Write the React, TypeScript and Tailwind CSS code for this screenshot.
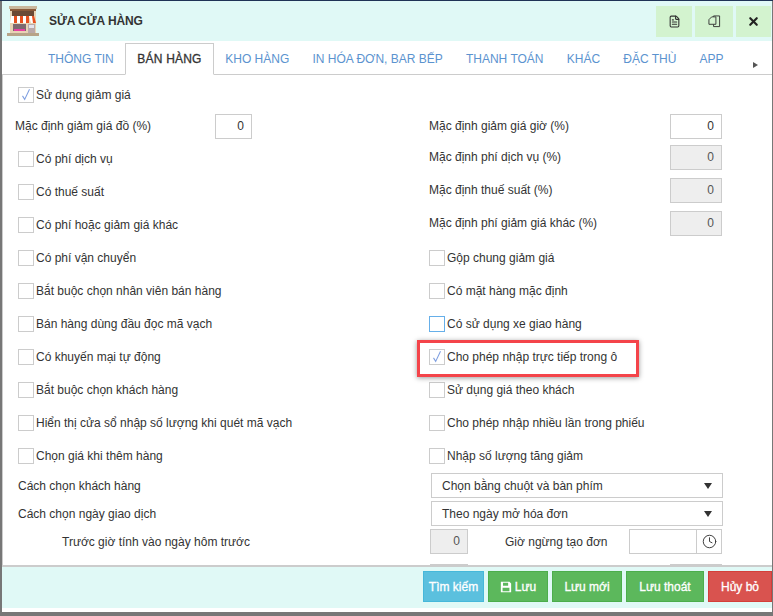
import { FileText, X, Clock } from "lucide-react"

const tabs = ["THÔNG TIN", "BÁN HÀNG", "KHO HÀNG", "IN HÓA ĐƠN, BAR BẾP", "THANH TOÁN", "KHÁC", "ĐẶC THÙ", "APP"]

function Check({ label, checked, focus }: { label: string; checked?: boolean; focus?: boolean }) {
  return (
    <div className="flex items-center h-[33px]">
      <span className={`w-[16px] h-[16px] bg-white border flex items-center justify-center shrink-0 ${focus ? "border-[#66afe9]" : "border-[#ccc]"}`}>
        {checked && (
          <svg viewBox="0 0 16 16" className="w-[14px] h-[14px]">
            <path d="M4 9 L6.5 13 L12 1.5" fill="none" stroke="#7f9fe0" strokeWidth="1.2" />
          </svg>
        )}
      </span>
      <span className="ml-[2px] text-[12px] whitespace-nowrap">{label}</span>
    </div>
  )
}

function Num({ w, off }: { w: string; off?: boolean }) {
  return (
    <div className={`${w} h-[25px] border border-[#ccc] text-right pr-[7px] text-[12px] leading-[23px] ${off ? "bg-[#eee] text-[#555]" : "bg-white"}`}>0</div>
  )
}

function Field({ label }: { label: string }) {
  return (
    <div className="flex items-center justify-between h-[33px] pb-[3px]">
      <span className="text-[12px]">{label}</span>
      <Num w="w-[52px]" off />
    </div>
  )
}

function Select({ text }: { text: string }) {
  return (
    <div className="w-[292px] h-[25px] border border-[#ccc] bg-white flex items-center justify-between pl-[10px] pr-[10px] text-[12px]">
      <span>{text}</span>
      <span className="w-0 h-0 border-x-[4px] border-x-transparent border-t-[6px] border-t-[#333]" />
    </div>
  )
}

function Store() {
  return (
    <svg viewBox="0 0 32 32" className="w-[32px] h-[32px]">
      <rect x="2" y="1" width="28" height="3" fill="#c9b79c" />
      <rect x="3" y="4" width="26" height="24" fill="#e8d3b4" />
      <rect x="3" y="4" width="26" height="2" fill="#8a5a3a" />
      <rect x="5" y="6" width="22" height="5" fill="#6b4a35" />
      <path d="M4 11h3v7H3zM10 11h3v7h-3zM16 11h3v7h-3zM22 11h3l2 7h-3z" fill="#fff" />
      <path d="M7 11h3v7H7zM13 11h3v7h-3zM19 11h3v7h-3zM25 11h2l2 7h-3z" fill="#e8501e" />
      <rect x="6" y="19" width="13" height="7" fill="#7c6a70" />
      <rect x="7" y="24" width="11" height="2" fill="#e83fa0" />
      <rect x="21" y="19" width="7" height="9" fill="#b9a9a9" />
      <rect x="22" y="20" width="5" height="3" fill="#e4e4ee" />
      <rect x="0" y="28" width="32" height="3" fill="#b7a488" />
    </svg>
  )
}

function Duplicate() {
  return (
    <svg viewBox="0 0 14 14" className="w-[13px] h-[13px]" fill="none" stroke="#333" strokeWidth="1">
      <path d="M6 3 V1 H12.5 V12.5 H6 V10" />
      <path d="M1 5 L4 2 H8.5 V10 H1 Z" fill="#d3f3cf" />
    </svg>
  )
}

function Floppy() {
  return (
    <svg viewBox="0 0 14 14" className="w-[12px] h-[12px]" fill="#fff">
      <path fillRule="evenodd" d="M1 1h10l2 2v10H1zM3.5 2v3.5h6V2zM3 8v4h8V8z" />
    </svg>
  )
}

export default function App() {
  return (
    <div className="relative w-[773px] h-[616px] bg-[#777] overflow-hidden text-[#333] font-['Liberation_Sans',Arial,sans-serif]">
      <div className="h-px bg-[#1f3356]" />
      <div className="ml-[2px] mr-[1px] h-[611px] bg-white flex flex-col">
        {/* header */}
        <div className="h-[40px] bg-[#e0f9f6] flex items-center pl-[5px] pr-[1px] shrink-0">
          <Store />
          <span className="ml-[10px] text-[12px] font-bold text-[#333] tracking-[-0.1px]">SỬA CỬA HÀNG</span>
          <div className="ml-auto flex gap-[3px]">
            <button className="w-[36px] h-[31px] bg-[#d3f3cf] flex items-center justify-center"><FileText className="w-[13px] h-[13px] text-[#333]" /></button>
            <button className="w-[38px] h-[31px] bg-[#d3f3cf] flex items-center justify-center"><Duplicate /></button>
            <button className="w-[35px] h-[31px] bg-[#d3f3cf] flex items-center justify-center"><X className="w-[13px] h-[13px] text-[#222]" strokeWidth={4} /></button>
          </div>
        </div>
        {/* tabs */}
        <div className="relative h-[34px] shrink-0 flex items-end pl-[34.4px] border-b border-[#ccc]">
          {tabs.map((t) => (
            <div
              key={t}
              className={
                t === "BÁN HÀNG"
                  ? "h-[32px] px-[11px] -mb-px bg-white border border-[#ccc] border-b-white text-[12px] leading-[30px] text-[#333] whitespace-nowrap tracking-[0.2px] [-webkit-text-stroke:0.3px_#333]"
                  : "h-[31px] px-[11.6px] -mb-px text-[12px] leading-[30px] text-[#5b93cf] whitespace-nowrap"
              }
            >
              {t}
            </div>
          ))}
          <span className="absolute left-[751px] top-[21px] w-0 h-0 border-y-[3.5px] border-y-transparent border-l-[5px] border-l-[#555]" />
        </div>
        {/* body */}
        <div className="flex-1 min-h-0 overflow-hidden border-l border-[#ccc] pl-[14px] pr-[48px] pt-[3px] text-[12px]">
          <div className="h-[33px] pl-[1px]"><Check label="Sử dụng giảm giá" checked /></div>
          <div className="grid grid-cols-[235px_293px] gap-x-[177px] -mt-[1px] h-[32px] items-center">
            <div className="flex items-center justify-between -ml-[2px]">
              <span>Mặc định giảm giá đồ (%)</span>
              <Num w="w-[37px]" />
            </div>
            <div className="flex items-center justify-between w-[293px]">
              <span>Mặc định giảm giá giờ (%)</span>
              <Num w="w-[52px]" />
            </div>
          </div>
          <div className="grid grid-cols-[412px_293px]">
            <div className="pl-px">
              <Check label="Có phí dịch vụ" />
              <Check label="Có thuế suất" />
              <Check label="Có phí hoặc giảm giá khác" />
              <Check label="Có phí vận chuyển" />
              <Check label="Bắt buộc chọn nhân viên bán hàng" />
              <Check label="Bán hàng dùng đầu đọc mã vạch" />
              <Check label="Có khuyến mại tự động" />
              <Check label="Bắt buộc chọn khách hàng" />
              <Check label="Hiển thị cửa sổ nhập số lượng khi quét mã vạch" />
              <Check label="Chọn giá khi thêm hàng" />
            </div>
            <div>
              <Field label="Mặc định phí dịch vụ (%)" />
              <Field label="Mặc định thuế suất (%)" />
              <Field label="Mặc định phí giảm giá khác (%)" />
              <Check label="Gộp chung giảm giá" />
              <Check label="Có mặt hàng mặc định" />
              <Check label="Có sử dụng xe giao hàng" focus />
              <Check label="Cho phép nhập trực tiếp trong ô" checked />
              <Check label="Sử dụng giá theo khách" />
              <Check label="Cho phép nhập nhiều lần trong phiếu" />
              <Check label="Nhập số lượng tăng giảm" />
            </div>
          </div>
          <div className="grid grid-cols-[414px_292px] gap-y-[3px] items-center mt-[1px]">
            <span className="pl-px">Cách chọn khách hàng</span>
            <Select text="Chọn bằng chuột và bàn phím" />
            <span className="pl-px">Cách chọn ngày giao dịch</span>
            <Select text="Theo ngày mở hóa đơn" />
            <span className="pl-[45px]">Trước giờ tính vào ngày hôm trước</span>
            <div className="flex items-center -ml-px">
              <Num w="w-[38px]" off />
              <span className="ml-[37px] w-[124px]">Giờ ngừng tạo đơn</span>
              <div className="w-[68px] h-[25px] border border-[#ccc]" />
              <div className="w-[25px] h-[25px] border border-l-0 border-[#ccc] flex items-center justify-center">
                <Clock className="w-[15px] h-[15px] text-[#333]" strokeWidth={1.5} />
              </div>
            </div>
            <span />
            {/* next row, cut off by the footer */}
            <div className="flex mt-[7px] -ml-px">
              <div className="w-[38px] h-[25px] border border-[#ccc] bg-[#eee]" />
              <div className="ml-[202px] w-[52px] h-[25px] border border-[#ccc] bg-[#eee]" />
            </div>
          </div>
        </div>
        {/* footer */}
        <div className="h-[43px] mb-[4px] shrink-0 bg-[#e0f9f6] border-t-2 border-[#ccc] flex justify-end items-start pt-[4px] gap-[4px]">
          <button className="w-[61px] h-[31px] bg-[#5bc0de] text-white text-[12px] [-webkit-text-stroke:0.3px_#fff] border border-[#46b8da] whitespace-nowrap">Tìm kiếm</button>
          <button className="w-[60px] h-[31px] bg-[#5cb85c] text-white text-[12px] [-webkit-text-stroke:0.3px_#fff] border border-[#4cae4c] flex items-center justify-center gap-[3px] whitespace-nowrap"><Floppy />Lưu</button>
          <button className="w-[70px] h-[31px] bg-[#5cb85c] text-white text-[12px] [-webkit-text-stroke:0.3px_#fff] border border-[#4cae4c] whitespace-nowrap">Lưu mới</button>
          <button className="w-[78px] h-[31px] bg-[#5cb85c] text-white text-[12px] [-webkit-text-stroke:0.3px_#fff] border border-[#4cae4c] whitespace-nowrap">Lưu thoát</button>
          <button className="w-[64px] h-[31px] bg-[#d9534f] text-white text-[12px] [-webkit-text-stroke:0.3px_#fff] border border-[#d43f3a] whitespace-nowrap">Hủy bỏ</button>
        </div>
      </div>
      {/* annotation */}
      <div className="absolute left-[417px] top-[340px] w-[222px] h-[37px] border-[3px] border-[#f4444a] shadow-[0_1px_5px_rgba(0,0,0,0.4)]" />
    </div>
  )
}
